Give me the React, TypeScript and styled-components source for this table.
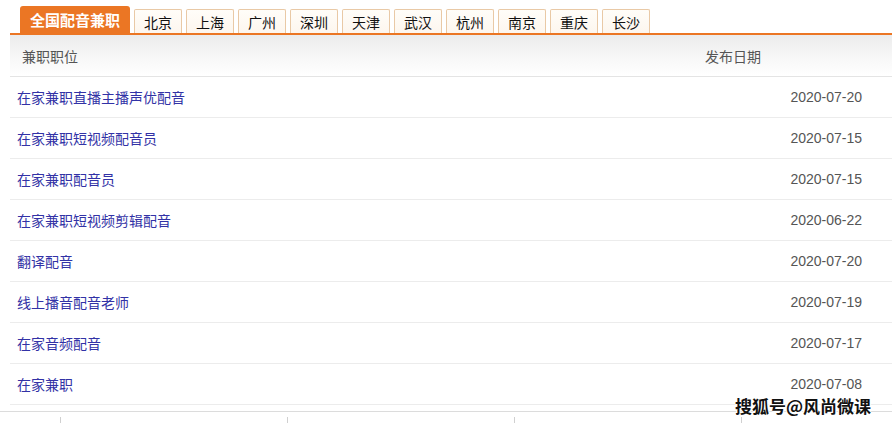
import React from "react";
import styled, { createGlobalStyle } from "styled-components";

const GlobalStyle = createGlobalStyle`
  html, body { margin: 0; padding: 0; background: #fff; }
  body {
    font-family: "Noto Sans CJK SC", "Noto Sans", sans-serif;
    overflow: hidden;
  }
`;

const ORANGE = "#eb7624";

const Page = styled.div`
  position: relative;
  width: 892px;
  height: 423px;
  overflow: hidden;
`;

const Board = styled.div`
  margin-left: 10px;
  width: 882px;
`;

const TabBar = styled.div`
  display: flex;
  align-items: flex-end;
  gap: 4px;
  padding: 6px 0 0 10px;
  border-bottom: 2px solid ${ORANGE};
`;

const Tab = styled.div<{ $active?: boolean }>`
  box-sizing: border-box;
  display: flex;
  align-items: center;
  justify-content: center;
  font-size: ${(p) => (p.$active ? "15px" : "14px")};
  font-weight: ${(p) => (p.$active ? 700 : 400)};
  width: ${(p) => (p.$active ? "110px" : "48px")};
  height: ${(p) => (p.$active ? "27px" : "24px")};
  color: ${(p) => (p.$active ? "#fff" : "#111")};
  background: ${(p) => (p.$active ? ORANGE : "linear-gradient(#fffdf9, #fdf6ee)")};
  border: ${(p) => (p.$active ? "none" : "1px solid #e9c9a6")};
  border-bottom: none;
  border-radius: ${(p) => (p.$active ? "3px 3px 0 0" : "2px 2px 0 0")};
  line-height: 1;
`;

const Table = styled.div`
  display: flex;
  flex-direction: column;
`;

const HeadRow = styled.div`
  display: grid;
  grid-template-columns: 1fr 187px;
  align-items: center;
  height: 41px;
  background: linear-gradient(#ececec, #f7f7f7 55%, #fff);
  border-bottom: 1px solid #e4e4e4;
  font-size: 14px;
  color: #555;
`;

const HeadCell = styled.div<{ $pad?: number }>`
  padding-left: ${(p) => p.$pad ?? 0}px;
`;

const Row = styled.div`
  display: grid;
  grid-template-columns: 1fr 187px;
  align-items: center;
  height: 40px;
  border-bottom: 1px solid #ececec;
`;

const TitleLink = styled.a`
  padding-left: 7px;
  font-size: 14px;
  color: #3232a6;
  text-decoration: none;
`;

const DateCell = styled.div`
  text-align: right;
  padding-right: 30px;
  font-family: "Liberation Sans", Arial, sans-serif;
  font-size: 14px;
  color: #555;
`;

const Footer = styled.div`
  margin-top: 6px;
  border-top: 1px solid #dcdcdc;
  padding-top: 5px;
  display: grid;
  grid-template-columns: 60px repeat(4, 227px);
`;

const FootCell = styled.div<{ $line?: boolean }>`
  height: 20px;
  border-left: ${(p) => (p.$line ? "1px solid #d0d0d0" : "none")};
`;

const Watermark = styled.div`
  position: absolute;
  left: 735px;
  top: 393px;
  font-size: 17px;
  font-weight: 700;
  color: #111;
  text-shadow: -1px 0 #fff, 1px 0 #fff, 0 -1px #fff, 0 1px #fff, 1px 1px #fff, -1px -1px #fff;
  white-space: nowrap;
`;

const cities = ["北京", "上海", "广州", "深圳", "天津", "武汉", "杭州", "南京", "重庆", "长沙"];

const jobs: [string, string][] = [
  ["在家兼职直播主播声优配音", "2020-07-20"],
  ["在家兼职短视频配音员", "2020-07-15"],
  ["在家兼职配音员", "2020-07-15"],
  ["在家兼职短视频剪辑配音", "2020-06-22"],
  ["翻译配音", "2020-07-20"],
  ["线上播音配音老师", "2020-07-19"],
  ["在家音频配音", "2020-07-17"],
  ["在家兼职", "2020-07-08"],
];

export default function App() {
  return (
    <>
      <GlobalStyle />
      <Page>
        <Board>
          <TabBar>
            <Tab $active>全国配音兼职</Tab>
            {cities.map((c) => (
              <Tab key={c}>{c}</Tab>
            ))}
          </TabBar>
          <Table>
            <HeadRow>
              <HeadCell $pad={12}>兼职职位</HeadCell>
              <HeadCell>发布日期</HeadCell>
            </HeadRow>
            {jobs.map(([t, d], i) => (
              <Row key={i}>
                <TitleLink href="#">{t}</TitleLink>
                <DateCell>{d}</DateCell>
              </Row>
            ))}
          </Table>
        </Board>
        <Footer>
          <FootCell />
          <FootCell $line />
          <FootCell $line />
          <FootCell $line />
          <FootCell $line />
        </Footer>
        <Watermark>搜狐号@风尚微课</Watermark>
      </Page>
    </>
  );
}
